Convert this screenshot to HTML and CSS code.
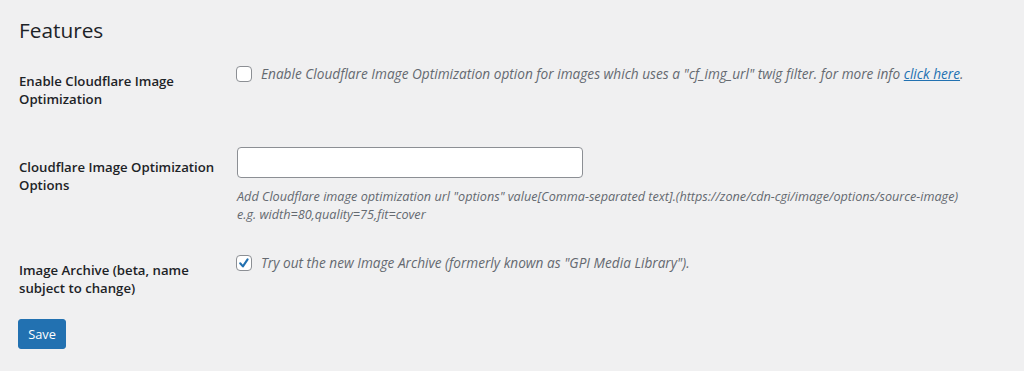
FILE: index.html
```html
<!DOCTYPE html>
<html>
<head>
<meta charset="utf-8">
<link rel="stylesheet" href="styles.css">
</head>
<body>
<div class="wrap">
  <h1 class="title">Features</h1>
  <div class="form">
    <div class="row row-1">
      <div class="label">Enable Cloudflare Image Optimization</div>
      <div class="field">
        <label class="check-line">
          <span class="cb"></span>
          <span class="desc">Enable Cloudflare Image Optimization option for images which uses a "cf_img_url" twig filter. for more info <a href="#" class="link">click here</a>.</span>
        </label>
      </div>
    </div>
    <div class="row row-2">
      <div class="label">Cloudflare Image Optimization Options</div>
      <div class="field">
        <div class="text-input"></div>
        <p class="help">Add Cloudflare image optimization url "options" value[Comma-separated text].(https://zone/cdn-cgi/image/options/source-image)<br>e.g. width=80,quality=75,fit=cover</p>
      </div>
    </div>
    <div class="row row-3">
      <div class="label">Image Archive (beta, name subject to change)</div>
      <div class="field">
        <label class="check-line">
          <span class="cb checked"><svg viewBox="0 0 16 16" width="16" height="16"><path d="M4.2 8.3 L6.9 11.4 L11.6 4.3" fill="none" stroke="#2271b1" stroke-width="2.1" stroke-linecap="round" stroke-linejoin="round"/></svg></span>
          <span class="desc">Try out the new Image Archive (formerly known as "GPI Media Library").</span>
        </label>
      </div>
    </div>
  </div>
  <div class="actions"><button class="btn">Save</button></div>
</div>
</body>
</html>
```
FILE: styles.css
```css
* { box-sizing: border-box; }
html, body { margin: 0; padding: 0; }
body {
  background: #f0f0f1;
  color: #1d2327;
  font-family: "Open Sans", "Noto Sans", sans-serif;
  font-size: 13px;
  width: 1024px;
  height: 371px;
  overflow: hidden;
}
.wrap { padding: 0 0 0 19px; }
.title {
  margin: 0;
  padding: 15px 0 0;
  font-size: 20.8px;
  font-weight: 400;
  line-height: 30px;
  color: #1d2327;
}
.row { display: flex; }
.label {
  width: 214px;
  flex: none;
  padding-right: 10px;
  font-weight: 600;
  font-size: 13.2px;
  line-height: 18px;
  color: #1d2327;
}
.field { flex: 1; }
.row-1 { padding-top: 16px; height: 102px; }
.row-1 .label { padding-top: 11px; }
.row-1 .field { padding-top: 5px; }
.row-2 { height: 107px; }
.row-2 .label { padding-top: 11px; }
.row-3 .label { padding-top: 7px; }
.row-3 .field { padding-top: 1px; }
.check-line { display: flex; align-items: center; gap: 9px; height: 16px; }
.cb {
  width: 16px; height: 16px;
  border: 1px solid #8c8f94;
  border-radius: 4px;
  background: #fff;
  flex: none;
  display: block;
  margin-left: 3px;
}
.cb svg { display: block; margin: -1px 0 0 -1px; }
.desc {
  font-style: italic;
  font-size: 13.65px;
  color: #646970;
  line-height: 18px;
  white-space: nowrap;
}
.link { color: #2271b1; text-decoration: underline; }
.text-input {
  width: 346px; height: 31px;
  margin-left: 4px;
  border: 1px solid #8c8f94;
  border-radius: 4px;
  background: #fff;
}
.help {
  margin: 9px 0 0 4px;
  font-style: italic;
  font-size: 12.65px;
  color: #646970;
  line-height: 18px;
  white-space: nowrap;
}
.actions { padding-top: 22px; }
.btn {
  display: block;
  background: #2271b1;
  border: 1px solid #2271b1;
  border-radius: 3px;
  color: #fff;
  font-family: "Open Sans", "Noto Sans", sans-serif;
  font-size: 12.8px;
  height: 30px;
  width: 48px;
  padding: 0;
  margin-left: -1px;
}
```
